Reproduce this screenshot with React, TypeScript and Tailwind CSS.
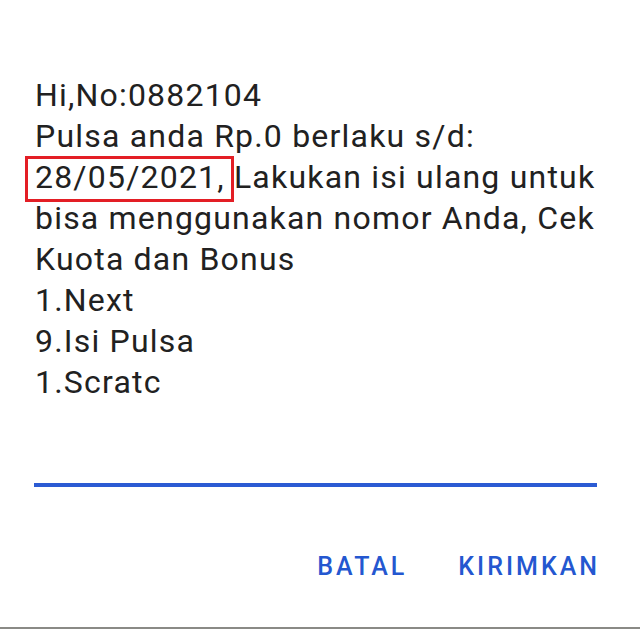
import React from 'react';

const lines = ['Hi,No:0882104', 'Pulsa anda Rp.0 berlaku s/d:'];
const tail = ['bisa menggunakan nomor Anda, Cek', 'Kuota dan Bonus', '1.Next', '9.Isi Pulsa', '1.Scratc'];

export default function App() {
  return (
    <div className="h-[629px] w-[640px] bg-white border-b-2 border-[#8a8a86] flex flex-col overflow-hidden" style={{ fontFamily: 'Roboto, "Noto Sans", sans-serif' }}>
      {/* message body */}
      <div className="pt-[75px] pl-[35px] text-[32px] leading-[41px] tracking-[1.2px] text-[#212121] whitespace-nowrap">
        {lines.map((l) => (
          <div key={l}>{l}</div>
        ))}
        <div>
          <span className="relative">
            28/05/2021,
            <span className="absolute left-[-10px] top-[-2px] w-[209px] h-[46px] border-[3px] border-[#e31e25]" />
          </span>{' '}
          Lakukan isi ulang untuk
        </div>
        {tail.map((l) => (
          <div key={l}>{l}</div>
        ))}
      </div>

      {/* input underline */}
      <div className="mt-[80px] ml-[34px] mr-[43px] h-[4px] bg-[#2b5bd3]" />

      {/* dialog actions */}
      <div className="mt-[66px] mr-[40px] flex justify-end gap-[51px] text-[25px] leading-[28px] font-medium tracking-[3px] text-[#2457d0]">
        <button className="uppercase">Batal</button>
        <button className="uppercase">Kirimkan</button>
      </div>
    </div>
  );
}
